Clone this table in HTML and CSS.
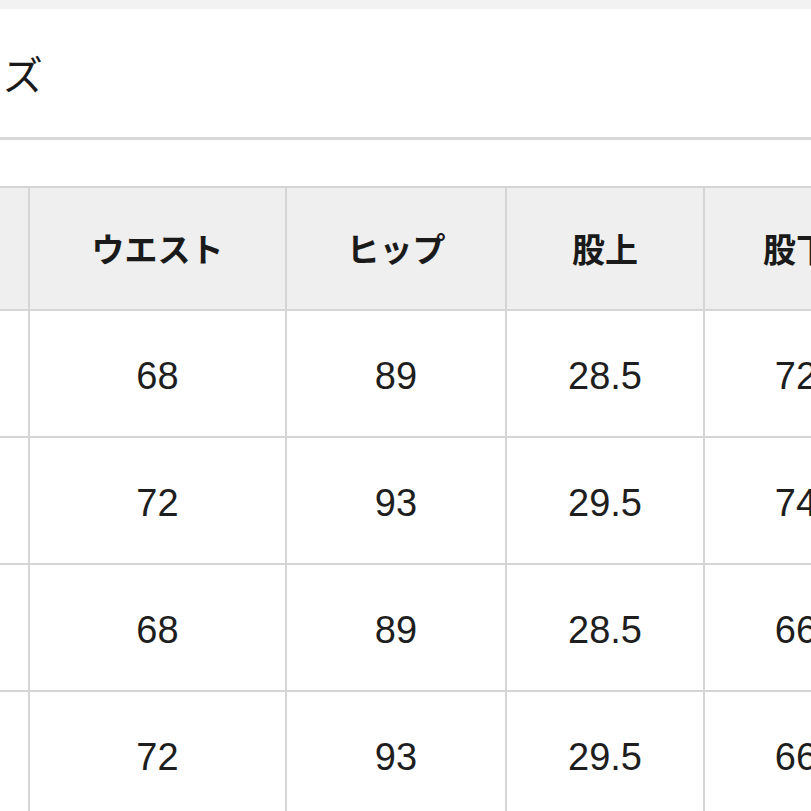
FILE: index.html
```html
<!DOCTYPE html>
<html lang="ja">
<head>
<meta charset="utf-8">
<link rel="stylesheet" href="styles.css">
</head>
<body>
<div class="topband"></div>
<div class="title-bar">
  <h2 class="title">サイズ</h2>
</div>
<div class="spacer"></div>
<div class="size-table">
  <div class="cell head"></div>
  <div class="cell head">ウエスト</div>
  <div class="cell head">ヒップ</div>
  <div class="cell head">股上</div>
  <div class="cell head">股下</div>

  <div class="cell">S</div>
  <div class="cell">68</div>
  <div class="cell">89</div>
  <div class="cell">28.5</div>
  <div class="cell">72</div>

  <div class="cell">M</div>
  <div class="cell">72</div>
  <div class="cell">93</div>
  <div class="cell">29.5</div>
  <div class="cell">74</div>

  <div class="cell">S</div>
  <div class="cell">68</div>
  <div class="cell">89</div>
  <div class="cell">28.5</div>
  <div class="cell">66</div>

  <div class="cell">M</div>
  <div class="cell">72</div>
  <div class="cell">93</div>
  <div class="cell">29.5</div>
  <div class="cell">66</div>
</div>
</body>
</html>
```

FILE: styles.css
```css
html, body {
  margin: 0;
  padding: 0;
  background: #ffffff;
  overflow: hidden;
  width: 811px;
  height: 811px;
}

body {
  font-family: "Liberation Sans", "Noto Sans CJK JP", sans-serif;
  color: #1c1c1c;
}

.topband {
  height: 9px;
  background: #f2f2f2;
}

.title-bar {
  height: 128px;
  border-bottom: 3px solid #d9d9d9;
  display: flex;
  align-items: center;
}

.title {
  margin: 0 0 0 -76px;
  font-family: "Noto Sans CJK JP", sans-serif;
  font-weight: 400;
  font-size: 40px;
  line-height: 1;
  color: #1a1a1a;
  white-space: nowrap;
}

.spacer {
  height: 46px;
}

.size-table {
  display: grid;
  grid-template-columns: 118px 255px 218px 196px 182px;
  grid-template-rows: 121px 125px 125px 125px 125px;
  gap: 2px;
  padding: 2px;
  background: #d5d5d5;
  margin-left: -92px;
  width: max-content;
}

.cell {
  background: #ffffff;
  display: flex;
  align-items: center;
  justify-content: center;
  padding-top: 6px;
  font-size: 38px;
  color: #1e1e1e;
}

.cell.head {
  background: #efefef;
  padding-top: 0;
  padding-bottom: 2px;
  font-family: "Noto Sans CJK JP", sans-serif;
  font-weight: 700;
  font-size: 33px;
  color: #1a1a1a;
}
```
